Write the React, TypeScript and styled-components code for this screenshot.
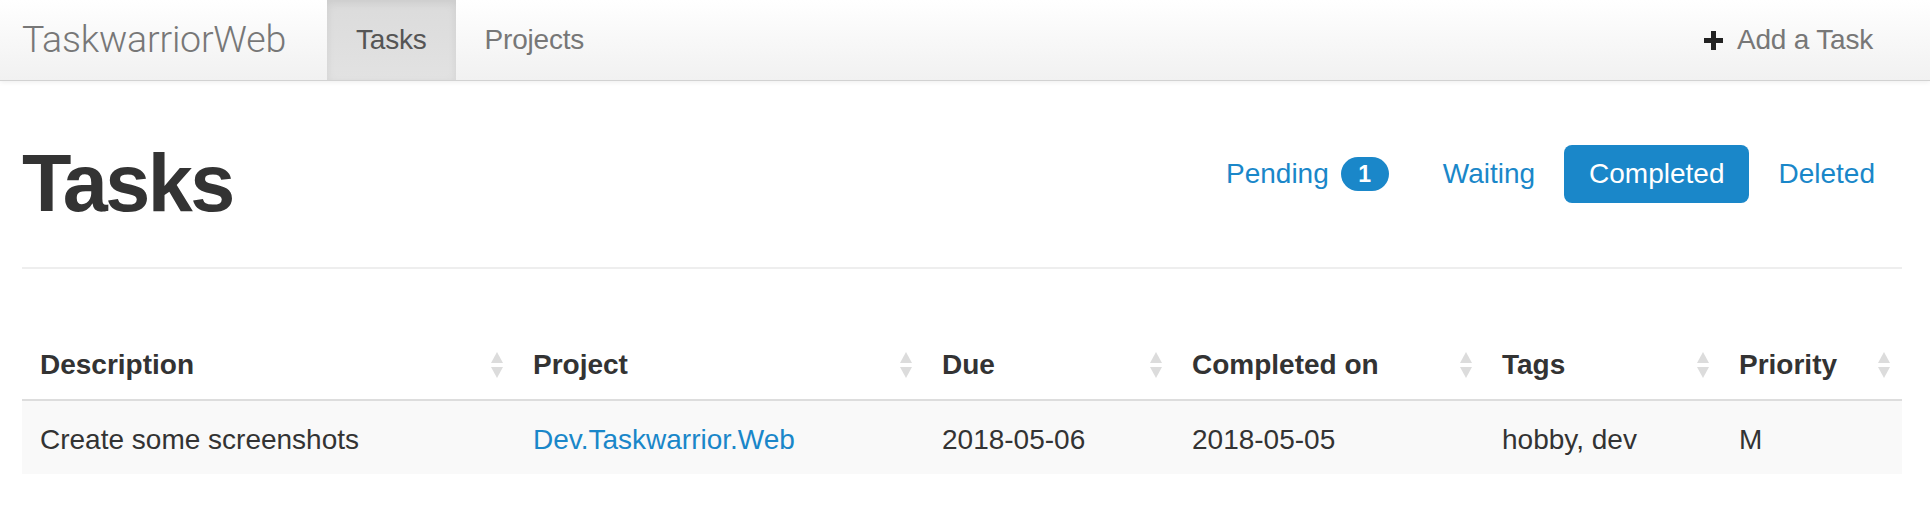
import React from "react";
import styled, { createGlobalStyle } from "styled-components";

const GlobalStyle = createGlobalStyle`
  html, body { margin: 0; padding: 0; background: #fff; }
  body {
    font-family: "Liberation Sans", Arial, Helvetica, sans-serif;
    font-size: 28px;
    line-height: 40px;
    color: #333;
  }
  * { box-sizing: border-box; }
`;

const BLUE = "#1a87c9";

const Navbar = styled.nav`
  height: 81px;
  display: flex;
  align-items: stretch;
  padding: 0 28px 0 22px;
  background: linear-gradient(to bottom, #ffffff 0%, #f1f1f1 100%);
  border-bottom: 1px solid #d2d2d2;
  box-shadow: 0 1px 5px rgba(0, 0, 0, 0.075);
`;

const Brand = styled.a`
  display: flex;
  align-items: center;
  margin-right: 41px;
  font-family: "Roboto", "Liberation Sans", sans-serif;
  font-weight: 300;
  font-size: 37.5px;
  letter-spacing: -0.2px;
  color: #777;
  text-decoration: none;
  padding-bottom: 2px;
`;

const NavList = styled.ul`
  display: flex;
  align-items: stretch;
  list-style: none;
  margin: 0;
  padding: 0;
`;

const NavRight = styled(NavList)`
  margin-left: auto;
`;

const NavLink = styled.a<{ $active?: boolean }>`
  display: flex;
  align-items: center;
  gap: 14px;
  height: 80px;
  padding: 0 29px;
  font-size: 28px;
  letter-spacing: -0.2px;
  text-decoration: none;
  color: ${(p) => (p.$active ? "#555" : "#777")};
  background: ${(p) =>
    p.$active ? "linear-gradient(to bottom, #dbdbdb 0%, #e2e2e2 100%)" : "transparent"};
  box-shadow: ${(p) => (p.$active ? "inset 0 3px 9px rgba(0,0,0,0.075)" : "none")};
`;

const PlusIcon = () => (
  <svg width="19" height="19" viewBox="0 0 19 19" aria-hidden="true">
    <rect x="7" y="0" width="5" height="19" fill="#222" />
    <rect x="0" y="7" width="19" height="5" fill="#222" />
  </svg>
);

const Main = styled.main`
  padding: 58px 28px 0 22px;
`;

const PageHeader = styled.div`
  display: flex;
  align-items: flex-start;
  justify-content: space-between;
  padding-bottom: 40px;
  border-bottom: 2px solid #eeeeee;
`;

const Title = styled.h1`
  margin: 0;
  font-size: 81px;
  line-height: 88px;
  font-weight: 700;
  letter-spacing: -2.6px;
  color: #333;
`;

const Pills = styled.ul`
  display: flex;
  gap: 4px;
  list-style: none;
  margin: 6px 2px 0 0;
  padding: 0;
`;

const Pill = styled.a<{ $active?: boolean }>`
  display: flex;
  align-items: center;
  padding: 9px 25px;
  line-height: 40px;
  border-radius: 8px;
  font-size: 28px;
  text-decoration: none;
  color: ${(p) => (p.$active ? "#fff" : BLUE)};
  background: ${(p) => (p.$active ? BLUE : "transparent")};
`;

const Badge = styled.span`
  display: inline-flex;
  align-items: center;
  justify-content: center;
  margin-left: 12px;
  min-width: 48px;
  height: 34px;
  padding: 0 14px;
  border-radius: 17px;
  background: ${BLUE};
  color: #fff;
  font-weight: 700;
  font-size: 23px;
  line-height: 1;
`;

const Table = styled.table`
  width: 100%;
  margin-top: 60px;
  border-collapse: collapse;
  table-layout: fixed;
`;

const HeadCell = styled.th`
  padding: 16px 9px 14px 18px;
  text-align: left;
  font-weight: 700;
  line-height: 40px;
  color: #333;
  border-bottom: 2px solid #dddddd;
`;

const HeadInner = styled.div`
  display: flex;
  align-items: center;
  justify-content: space-between;
`;

const Row = styled.tr`
  background: #f9f9f9;
`;

const Cell = styled.td`
  padding: 19px 18px 14px 18px;
  line-height: 40px;
  color: #333;
  white-space: nowrap;
`;

const Link = styled.a`
  color: ${BLUE};
  text-decoration: none;
`;

const SortIcon = () => (
  <svg width="18" height="28" viewBox="0 0 18 28" aria-hidden="true">
    <polygon points="9,1 15,12 3,12" fill="#dcdcdc" />
    <polygon points="3,16 15,16 9,27" fill="#dcdcdc" />
  </svg>
);

const columns = [
  { label: "Description", width: 493 },
  { label: "Project", width: 409 },
  { label: "Due", width: 250 },
  { label: "Completed on", width: 310 },
  { label: "Tags", width: 237 },
  { label: "Priority", width: 181 },
];

export default function App() {
  return (
    <>
      <GlobalStyle />
      <Navbar>
        <Brand href="#">TaskwarriorWeb</Brand>
        <NavList>
          <li>
            <NavLink href="#" $active>
              Tasks
            </NavLink>
          </li>
          <li>
            <NavLink href="#">Projects</NavLink>
          </li>
        </NavList>
        <NavRight>
          <li>
            <NavLink href="#">
              <PlusIcon />
              Add a Task
            </NavLink>
          </li>
        </NavRight>
      </Navbar>
      <Main>
        <PageHeader>
          <Title>Tasks</Title>
          <Pills>
            <li>
              <Pill href="#">
                Pending<Badge>1</Badge>
              </Pill>
            </li>
            <li>
              <Pill href="#">Waiting</Pill>
            </li>
            <li>
              <Pill href="#" $active>
                Completed
              </Pill>
            </li>
            <li>
              <Pill href="#">Deleted</Pill>
            </li>
          </Pills>
        </PageHeader>
        <Table>
          <colgroup>
            {columns.map((c) => (
              <col key={c.label} style={{ width: c.width }} />
            ))}
          </colgroup>
          <thead>
            <tr>
              {columns.map((c) => (
                <HeadCell key={c.label}>
                  <HeadInner>
                    <span>{c.label}</span>
                    <SortIcon />
                  </HeadInner>
                </HeadCell>
              ))}
            </tr>
          </thead>
          <tbody>
            <Row>
              <Cell>Create some screenshots</Cell>
              <Cell>
                <Link href="#">Dev.Taskwarrior.Web</Link>
              </Cell>
              <Cell>2018-05-06</Cell>
              <Cell>2018-05-05</Cell>
              <Cell>hobby, dev</Cell>
              <Cell>M</Cell>
            </Row>
          </tbody>
        </Table>
      </Main>
    </>
  );
}
